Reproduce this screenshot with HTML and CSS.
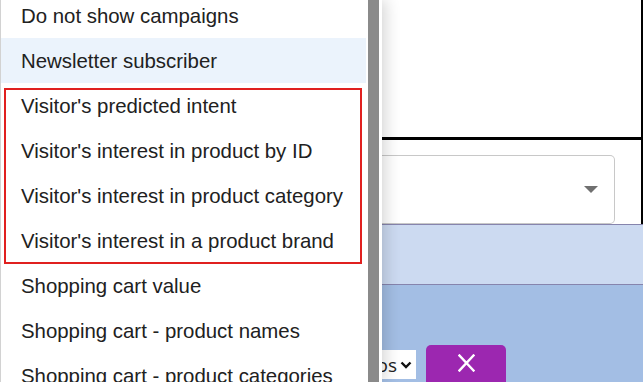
FILE: index.html
```html
<!DOCTYPE html>
<html lang="en">
<head>
    <meta charset="UTF-8">
    <meta name="viewport" content="width=device-width, initial-scale=1.0">
    <title>Segment conditions</title>
    <link rel="stylesheet" href="styles.css">
</head>
<body>
    <div class="dropdown">
        <ul class="options">
            <li>Do not show campaigns</li>
            <li class="hovered">Newsletter subscriber</li>
            <li>Visitor's predicted intent</li>
            <li>Visitor's interest in product by ID</li>
            <li>Visitor's interest in product category</li>
            <li>Visitor's interest in a product brand</li>
            <li>Shopping cart value</li>
            <li>Shopping cart - product names</li>
            <li>Shopping cart - product categories</li>
        </ul>
        <div class="scrollbar"></div>
        <!-- annotation box over the four visitor options -->
        <div class="highlight"></div>
    </div>

    <div class="page">
        <div class="top-panel"></div>
        <div class="field-row">
            <div class="select">
                <span class="caret"></span>
            </div>
        </div>
        <div class="band"></div>
        <div class="footer">
            <div class="mini-select">
                <span class="mini-text">Photos</span>
                <svg class="chevron" width="12" height="8" viewBox="0 0 12 8">
                    <path d="M1.5 1.5 L6 6 L10.5 1.5" fill="none" stroke="#111" stroke-width="2.4"/>
                </svg>
            </div>
            <button class="remove" type="button" aria-label="Remove">
                <svg width="17" height="18" viewBox="0 0 17 18">
                    <path d="M1.5 1.5 L15.5 16.5 M15.5 1.5 L1.5 16.5" stroke="#fff" stroke-width="2.4" stroke-linecap="square"/>
                </svg>
            </button>
        </div>
    </div>
</body>
</html>
```

FILE: styles.css
```css
/* General Styles */
body {
    margin: 0;
    width: 643px;
    height: 382px;
    overflow: hidden;
    display: flex;
    font-family: 'Liberation Sans', Arial, sans-serif;
    background: #fff;
}

/* Dropdown list */
.dropdown {
    position: relative;
    z-index: 2;
    flex: none;
    width: 381px;
    display: flex;
    background: #fff;
    border-left: 1px solid #d2d2d2;
    box-shadow: 4px 0 14px rgba(0, 0, 0, 0.16);
}

.options {
    list-style: none;
    margin: -7px 0 0 0;
    padding: 0;
    width: 365px;
}

.options li {
    height: 43px;
    line-height: 43px;
    padding: 2px 0 0 20px;
    font-size: 20.4px;
    color: #212121;
    white-space: nowrap;
}

.options li.hovered {
    background: #ebf3fc;
}

.scrollbar {
    width: 11px;
    margin-left: 2px;
    background: #8a8a8a;
}

.highlight {
    position: absolute;
    left: 3px;
    top: 88px;
    width: 358px;
    height: 176px;
    box-sizing: border-box;
    border: 2px solid #e0201f;
}

/* Page behind the dropdown */
.page {
    flex: 1;
    display: flex;
    flex-direction: column;
}

.top-panel {
    height: 137px;
    flex: none;
    border-bottom: 3px solid #000;
    border-right: 2px solid #000;
}

.field-row {
    height: 69px;
    flex: none;
    padding: 15px 26px 0 0;
    border-right: 2px solid #000;
}

.select {
    height: 67px;
    display: flex;
    align-items: center;
    justify-content: flex-end;
    padding-right: 16px;
    border: 1px solid #c8c8c8;
    border-left: none;
    border-radius: 0 5px 5px 0;
}

.caret {
    width: 0;
    height: 0;
    border-left: 7px solid transparent;
    border-right: 7px solid transparent;
    border-top: 7px solid #707070;
}

.band {
    height: 59px;
    flex: none;
    background: #ccdaf1;
    border-top: 1px solid #8684ad;
    border-bottom: 1px solid #8684ad;
}

.footer {
    flex: 1;
    display: flex;
    align-items: flex-start;
    background: #a3bee4;
}

.mini-select {
    width: 34px;
    height: 29px;
    margin-top: 65px;
    display: flex;
    align-items: center;
    justify-content: flex-end;
    overflow: hidden;
    background: #fff;
    gap: 3px;
    padding-right: 4px;
    box-sizing: border-box;
}

.mini-text {
    font-family: 'Open Sans', sans-serif;
    font-size: 19px;
    color: #222;
}

.chevron {
    flex: none;
}

.remove {
    width: 80px;
    height: 44px;
    margin: 60px 0 0 10px;
    border: none;
    border-radius: 5px;
    background: #9c27b0;
    display: flex;
    align-items: center;
    justify-content: center;
    padding: 0 0 8px 0;
}
```
